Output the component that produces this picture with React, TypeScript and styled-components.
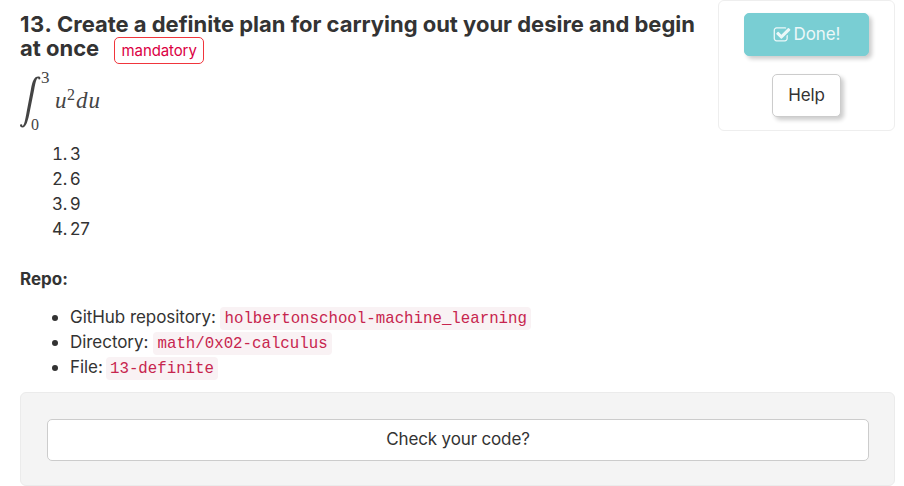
import React from "react";
import styled, { createGlobalStyle } from "styled-components";

const GlobalStyle = createGlobalStyle`
  *, *::before, *::after { box-sizing: border-box; }
  body {
    margin: 0;
    background: #fff;
    color: #333;
    font-family: Inter, "Liberation Sans", sans-serif;
    font-size: 17px;
    line-height: 25px;
    overflow: hidden;
  }
`;

const Page = styled.main`
  height: 486px;
  padding: 0 9px 0 20px;
  display: flex;
  flex-direction: column;
`;

const Top = styled.header`
  display: flex;
  justify-content: space-between;
  align-items: flex-start;
  height: 142px;
`;

const Intro = styled.div`
  width: 690px;
  padding-top: 12px;
`;

const Title = styled.h4`
  margin: 0;
  height: 48px;
  font-size: 22px;
  font-weight: 700;
  line-height: 24px;
  letter-spacing: -0.02px;
  white-space: nowrap;
`;

const TitleLine = styled.div`
  display: flex;
  height: 24px;
`;

const TitleNumber = styled.span`
  width: 37px;
  letter-spacing: 0.6px;
`;

const Badge = styled.span`
  flex: none;
  width: 90px;
  height: 27px;
  margin: 1px 0 0 15px;
  border: 1px solid #f0353c;
  border-radius: 5px;
  color: #db0043;
  font-size: 15px;
  font-weight: 400;
  line-height: 26px;
  letter-spacing: -0.1px;
  text-align: center;
`;

const Formula = styled.svg`
  display: block;
  width: 84px;
  height: 62px;
  margin-top: 10px;
  fill: #444;
  font-family: "Liberation Serif", serif;
`;

const Actions = styled.aside`
  width: 177px;
  height: 131px;
  padding-top: 12px;
  border: 1px solid #eee;
  border-radius: 6px;
  display: flex;
  flex-direction: column;
  align-items: center;
  gap: 18px;
`;

const ActionButton = styled.button<{ $done?: boolean }>`
  width: ${(p) => (p.$done ? 125 : 69)}px;
  height: 43px;
  padding: 0;
  display: flex;
  align-items: center;
  justify-content: center;
  gap: 3px;
  border: 1px solid ${(p) => (p.$done ? "#79ced3" : "#ccc")};
  border-radius: 5px;
  background: ${(p) => (p.$done ? "#79ced3" : "#fff")};
  color: ${(p) => (p.$done ? "#ecf8f9" : "#333")};
  box-shadow: 3px 3px 4px rgba(0, 0, 0, 0.2);
  font: inherit;
  letter-spacing: -0.1px;
`;

const CheckIcon = styled.svg`
  width: 18px;
  height: 18px;
  fill: currentColor;
`;

const Choices = styled.ol`
  margin: 0;
  padding-left: 32px;
  list-style: none;
`;

const Choice = styled.li`
  display: flex;
`;

const Ordinal = styled.span`
  width: 18px;
  letter-spacing: -0.2px;
  font-variant-numeric: tabular-nums;
`;

const SectionTitle = styled.strong`
  margin-top: 25px;
  font-weight: 700;
  letter-spacing: 0;
`;

const Details = styled.ul`
  margin: 13px 0 0;
  padding: 0 0 0 33px;
  list-style: none;
`;

const Detail = styled.li`
  display: flex;
  align-items: center;
  height: 25px;

  &::before {
    content: "";
    width: 6px;
    height: 6px;
    margin: 1px 12px 0 -1px;
    border-radius: 50%;
    background: #333;
  }
`;

const Label = styled.span<{ $width: number }>`
  width: ${(p) => p.$width}px;
  letter-spacing: -0.05px;
  white-space: nowrap;
`;

const Code = styled.code`
  height: 23px;
  margin-top: 2px;
  padding: 0 4.5px;
  border-radius: 4px;
  background: #f9f2f4;
  color: #c7254e;
  font-family: "Liberation Mono", monospace;
  font-size: 15.75px;
  line-height: 24px;
`;

const CheckPanel = styled.section`
  height: 94px;
  margin-top: 12px;
  padding: 26px 25px 24px 26px;
  border: 1px solid #ebebeb;
  border-radius: 6px;
  background: #f4f4f4;
`;

const CheckButton = styled.button`
  width: 100%;
  height: 42px;
  padding: 0 0 2px;
  border: 1px solid #ccc;
  border-radius: 5px;
  background: #fff;
  color: #333;
  font: inherit;
  letter-spacing: -0.15px;
`;

const choices = ["3", "6", "9", "27"];
const details = [
  { label: "GitHub repository:", value: "holbertonschool-machine_learning", width: 150 },
  { label: "Directory:", value: "math/0x02-calculus", width: 83 },
  { label: "File:", value: "13-definite", width: 35.5 },
];

export default function App() {
  return (
    <>
      <GlobalStyle />
      <Page>
        <Top>
          <Intro>
            <Title>
              <TitleLine>
                <TitleNumber>13. </TitleNumber>
                Create a definite plan for carrying out your desire and begin
              </TitleLine>
              <TitleLine>
                at once <Badge>mandatory</Badge>
              </TitleLine>
            </Title>
            <Formula viewBox="0 0 84 62" aria-label="Integral from 0 to 3 of u squared du">
              <path d="M20.4 8.2C20.4 9 19.8 9.5 19.1 9.4C18.4 9.3 18.1 8.7 18.3 8C16.4 8 15.6 12 14.1 20L10.1 40C8 51 6.2 57.5 2.4 57.5C1 57.5 0 56.7 0 55.6C0 54.7.7 54.2 1.4 54.3C2.2 54.4 2.4 55 2.3 56C4.3 55.7 5.2 50 6.8 41L10.8 20C12.5 11 13.9 6.5 18.4 6.5C19.6 6.5 20.4 7.2 20.4 8.2Z" />
              <text x="21" y="13" fontSize="16" textLength="8.5" lengthAdjust="spacingAndGlyphs">3</text>
              <text x="11" y="60" fontSize="16">0</text>
              <text x="35" y="38" fontSize="23" fontStyle="italic">u</text>
              <text x="47" y="30" fontSize="16">2</text>
              <text x="56" y="38" fontSize="23" fontStyle="italic" textLength="24">du</text>
            </Formula>
          </Intro>
          <Actions>
            <ActionButton $done>
              <CheckIcon viewBox="0 0 1792 1792" aria-hidden="true">
                <path d="M1472 930v318q0 119-84.5 203.5t-203.5 84.5h-832q-119 0-203.5-84.5t-84.5-203.5v-832q0-119 84.5-203.5t203.5-84.5h832q63 0 117 25 15 7 18 23 3 17-9 29l-49 49q-10 10-23 10-3 0-9-2-23-6-45-6h-832q-66 0-113 47t-47 113v832q0 66 47 113t113 47h832q66 0 113-47t47-113v-254q0-13 9-22l64-64q10-10 23-10 6 0 12 3 20 8 20 29zm231-489l-814 814q-24 24-57 24t-57-24l-430-430q-24-24-24-57t24-57l110-110q24-24 57-24t57 24l263 263 647-647q24-24 57-24t57 24l110 110q24 24 24 57t-24 57z" />
              </CheckIcon>
              Done!
            </ActionButton>
            <ActionButton>Help</ActionButton>
          </Actions>
        </Top>
        <Choices>
          {choices.map((choice, i) => (
            <Choice key={choice}>
              <Ordinal>{i + 1}.</Ordinal>
              {choice}
            </Choice>
          ))}
        </Choices>
        <SectionTitle>Repo:</SectionTitle>
        <Details>
          {details.map(({ label, value, width }) => (
            <Detail key={label}>
              <Label $width={width}>{label}</Label>
              <Code>{value}</Code>
            </Detail>
          ))}
        </Details>
        <CheckPanel>
          <CheckButton>Check your code?</CheckButton>
        </CheckPanel>
      </Page>
    </>
  );
}
